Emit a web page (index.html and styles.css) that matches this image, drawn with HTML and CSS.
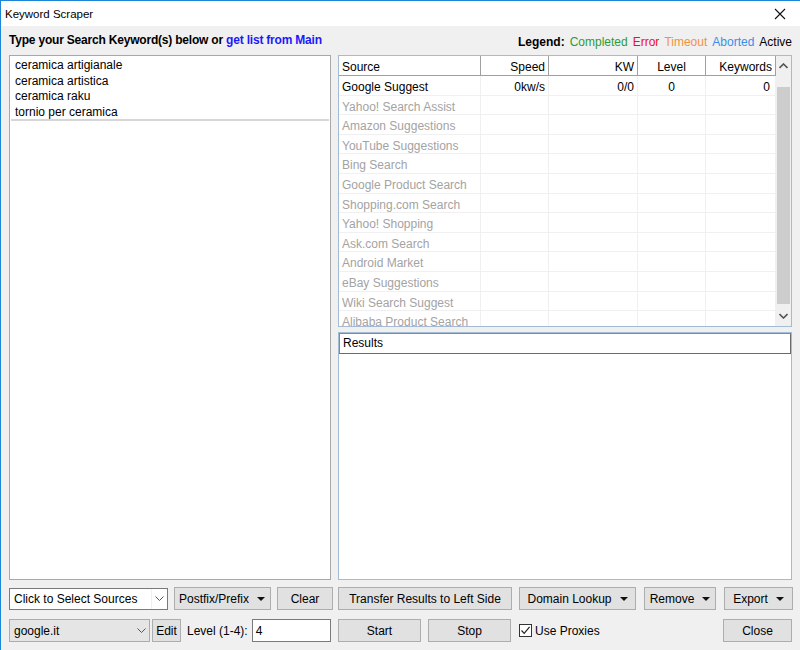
FILE: index.html
```html
<!DOCTYPE html>
<html>
<head>
<meta charset="utf-8">
<title>Keyword Scraper</title>
<link rel="stylesheet" href="styles.css">
</head>
<body>
<div class="window">
  <div class="titlebar">
    <span class="title">Keyword Scraper</span>
    <svg class="close-x" width="12" height="12" viewBox="0 0 12 12"><path d="M1 1L11 11M11 1L1 11" stroke="#111" stroke-width="1.1" fill="none"/></svg>
  </div>
  <div class="content">
    <div class="topline">
      <div class="heading">Type your Search Keyword(s) below or <span class="link">get list from Main</span></div>
      <div class="legend"><b>Legend:</b><span class="c-green">Completed</span><span class="c-red">Error</span><span class="c-orange">Timeout</span><span class="c-blue">Aborted</span><span>Active</span></div>
    </div>
    <div class="main">
      <div class="left">
        <div class="kwbox">
          <div class="kwline">ceramica artigianale</div>
          <div class="kwline">ceramica artistica</div>
          <div class="kwline">ceramica raku</div>
          <div class="kwline">tornio per ceramica</div>
          <div class="kwsep"></div>
        </div>
        <div class="brow row1">
          <div class="combo combo-white w-sources"><span>Click to Select Sources</span><span class="chev"><svg width="9" height="6" viewBox="0 0 9 6"><path d="M0.5 0.5L4.5 4.5L8.5 0.5" stroke="#555" fill="none"/></svg></span></div>
          <div class="btn w-postfix">Postfix/Prefix <i class="tri"></i></div>
          <div class="btn w-clear">Clear</div>
        </div>
        <div class="brow row2">
          <div class="combo combo-gray w-google"><span>google.it</span><span class="chev"><svg width="9" height="6" viewBox="0 0 9 6"><path d="M0.5 0.5L4.5 4.5L8.5 0.5" stroke="#555" fill="none"/></svg></span></div>
          <div class="btn w-edit">Edit</div>
          <span class="lbl">Level (1-4):</span>
          <div class="input w-level">4</div>
        </div>
      </div>
      <div class="right">
        <div class="table">
          <div class="grid">
            <div class="th left-al">Source</div>
            <div class="th right-al">Speed</div>
            <div class="th right-al">KW</div>
            <div class="th center-al">Level</div>
            <div class="th right-al">Keywords</div>

            <div class="td left-al active">Google Suggest</div>
            <div class="td right-al active">0kw/s</div>
            <div class="td right-al active">0/0</div>
            <div class="td center-al active">0</div>
            <div class="td right-al active kwc">0</div>

            <div class="td left-al">Yahoo! Search Assist</div><div class="td"></div><div class="td"></div><div class="td"></div><div class="td"></div>
            <div class="td left-al">Amazon Suggestions</div><div class="td"></div><div class="td"></div><div class="td"></div><div class="td"></div>
            <div class="td left-al">YouTube Suggestions</div><div class="td"></div><div class="td"></div><div class="td"></div><div class="td"></div>
            <div class="td left-al">Bing Search</div><div class="td"></div><div class="td"></div><div class="td"></div><div class="td"></div>
            <div class="td left-al">Google Product Search</div><div class="td"></div><div class="td"></div><div class="td"></div><div class="td"></div>
            <div class="td left-al">Shopping.com Search</div><div class="td"></div><div class="td"></div><div class="td"></div><div class="td"></div>
            <div class="td left-al">Yahoo! Shopping</div><div class="td"></div><div class="td"></div><div class="td"></div><div class="td"></div>
            <div class="td left-al">Ask.com Search</div><div class="td"></div><div class="td"></div><div class="td"></div><div class="td"></div>
            <div class="td left-al">Android Market</div><div class="td"></div><div class="td"></div><div class="td"></div><div class="td"></div>
            <div class="td left-al">eBay Suggestions</div><div class="td"></div><div class="td"></div><div class="td"></div><div class="td"></div>
            <div class="td left-al">Wiki Search Suggest</div><div class="td"></div><div class="td"></div><div class="td"></div><div class="td"></div>
            <div class="td left-al">Alibaba Product Search</div><div class="td"></div><div class="td"></div><div class="td"></div><div class="td"></div>
          </div>
          <div class="scrollbar">
            <div class="sb-btn"><svg width="9" height="6" viewBox="0 0 9 6"><path d="M0.5 5L4.5 1L8.5 5" stroke="#555" stroke-width="1.6" fill="none"/></svg></div>
            <div class="sb-track"><div class="sb-thumb"></div></div>
            <div class="sb-btn"><svg width="9" height="6" viewBox="0 0 9 6"><path d="M0.5 1L4.5 5L8.5 1" stroke="#555" stroke-width="1.6" fill="none"/></svg></div>
          </div>
        </div>
        <div class="results">
          <div class="res-head">Results</div>
          <div class="res-body"></div>
        </div>
        <div class="brow row1">
          <div class="btn w-transfer">Transfer Results to Left Side</div>
          <div class="btn w-domain">Domain Lookup <i class="tri"></i></div>
          <div class="btn w-remove">Remove <i class="tri"></i></div>
          <div class="btn w-export">Export <i class="tri"></i></div>
        </div>
        <div class="brow row2">
          <div class="btn w-start">Start</div>
          <div class="btn w-stop">Stop</div>
          <label class="check"><span class="cbox"><svg width="11" height="11" viewBox="0 0 11 11"><path d="M1.5 5.5L4.2 8.3L9.6 1.8" stroke="#222" stroke-width="1.2" fill="none"/></svg></span>Use Proxies</label>
          <div class="spacer"></div>
          <div class="btn w-close">Close</div>
        </div>
      </div>
    </div>
  </div>
</div>
</body>
</html>
```

FILE: styles.css
```css
* { box-sizing: border-box; }
html, body { margin: 0; padding: 0; }
body {
  width: 800px;
  height: 650px;
  overflow: hidden;
  font-family: "Liberation Sans", Arial, sans-serif;
  font-size: 12px;
  color: #000;
  background: #f0f0f0;
}
.window {
  width: 800px;
  height: 650px;
  border-top: 1px solid #1c86d8;
  border-left: 1px solid #1c86d8;
  display: flex;
  flex-direction: column;
  background: #f0f0f0;
}
.titlebar {
  height: 25px;
  background: #fff;
  display: flex;
  align-items: center;
  justify-content: space-between;
  padding: 0 14px 0 4px;
  flex: none;
}
.title { font-size: 11.5px; }
.close-x { display: block; }
.content {
  flex: 1;
  padding: 0 8px 8px 8px;
  display: flex;
  flex-direction: column;
}
.topline {
  height: 29px;
  display: flex;
  justify-content: space-between;
  align-items: flex-start;
  flex: none;
}
.heading {
  font-weight: bold;
  font-size: 12px;
  padding-top: 7px;
  letter-spacing: -0.2px;
}
.link { color: #1a1aff; }
.legend {
  padding-top: 9px;
  font-size: 12px;
  display: flex;
  gap: 5px;
  white-space: nowrap;
}
.legend b { font-weight: bold; }
.c-green { color: #2f9a35; }
.c-red { color: #ec1028; }
.c-orange { color: #f6903c; }
.c-blue { color: #3b8ee8; }

.main {
  flex: 1;
  display: grid;
  grid-template-columns: 322px 454px;
  column-gap: 7px;
}
.left, .right {
  display: flex;
  flex-direction: column;
  min-height: 0;
}
.kwbox {
  flex: 1;
  background: #fff;
  border: 1px solid #a8a8a8;
  padding: 1px 1px 0 1px;
}
.kwline {
  height: 15.6px;
  line-height: 16px;
  padding-left: 4px;
  white-space: nowrap;
}
.kwsep {
  height: 2px;
  background: #d6d6d6;
}
.brow {
  display: flex;
  align-items: center;
  flex: none;
}
.row1 { margin-top: 7px; height: 23px; }
.row2 { margin-top: 9px; height: 23px; }

.btn {
  height: 23px;
  background: #e1e1e1;
  border: 1px solid #adadad;
  display: flex;
  align-items: center;
  justify-content: center;
  white-space: nowrap;
  flex: none;
}
.tri {
  display: inline-block;
  width: 0; height: 0;
  border-left: 4px solid transparent;
  border-right: 4px solid transparent;
  border-top: 4px solid #111;
  margin-left: 8px;
  margin-top: 1px;
}
.combo {
  height: 22px;
  display: flex;
  align-items: center;
  justify-content: space-between;
  padding-left: 4px;
  flex: none;
  white-space: nowrap;
}
.combo-white { background: #fff; border: 1px solid #7a7a7a; }
.combo-gray { background: #e5e5e5; border: 1px solid #acacac; height: 23px; }
.chev {
  width: 16px;
  height: 100%;
  display: flex;
  align-items: center;
  justify-content: center;
}
.combo-white .chev { border-left: 1px solid #f0f0f0; }
.chev svg { display: block; }

.w-sources { width: 159px; }
.w-postfix { width: 97px; margin-left: 6px; justify-content: flex-start; padding-left: 4px; }
.w-clear { width: 56px; margin-left: 6px; }
.w-google { width: 141px; }
.w-edit { width: 29px; margin-left: 2px; }
.lbl { margin-left: 6px; white-space: nowrap; flex: none; }
.input {
  height: 23px;
  background: #fff;
  border: 1px solid #7a7a7a;
  display: flex;
  align-items: center;
  padding-left: 3px;
}
.w-level { flex: 1; min-width: 0; margin-left: 4px; }

.w-transfer { width: 174px; }
.w-domain { width: 117px; margin-left: 7px; }
.w-remove { width: 72px; margin-left: 8px; }
.w-export { width: 69px; margin-left: 8px; }
.w-start { width: 83px; }
.w-stop { width: 83px; margin-left: 7px; }
.w-close { width: 69px; }
.spacer { flex: 1; }
.check {
  display: flex;
  align-items: center;
  margin-left: 8px;
  white-space: nowrap;
}
.cbox {
  width: 13px; height: 13px;
  border: 1px solid #333;
  background: #fff;
  display: flex;
  align-items: center;
  justify-content: center;
  margin-right: 3px;
}
.cbox svg { display: block; }

.table {
  height: 272px;
  border: 1px solid #a4bbd6;
  background: #fff;
  display: flex;
  overflow: hidden;
  flex: none;
}
.grid {
  width: 437px;
  display: grid;
  grid-template-columns: 142px 68px 89px 68px 70px;
  grid-auto-rows: 19.6px;
  grid-template-rows: 20px;
  align-content: start;
}
.th {
  height: 20px;
  border-right: 1px solid #a0a0a0;
  border-bottom: 1px solid #a0a0a0;
  line-height: 19px;
  padding: 2px 3px 0;
  white-space: nowrap;
}
.td {
  border-right: 1px solid #f0f0f0;
  border-bottom: 1px solid #f0f0f0;
  line-height: 19px;
  padding: 2px 3px 0;
  color: #a3a3a3;
  white-space: nowrap;
  overflow: hidden;
}
.td.active { color: #000; }
.td.kwc { padding-right: 5px; }
.left-al { text-align: left; }
.right-al { text-align: right; }
.center-al { text-align: center; }

.scrollbar {
  width: 15px;
  display: flex;
  flex-direction: column;
  background: #f0f0f0;
}
.sb-btn {
  height: 20px;
  display: flex;
  align-items: center;
  justify-content: center;
  flex: none;
}
.sb-btn svg { display: block; }
.sb-track { flex: 1; padding: 11px 1px 2px 1px; }
.sb-thumb { height: 100%; background: #cdcdcd; }

.results {
  flex: 1;
  margin-top: 5px;
  border: 1px solid #a4bbd6;
  background: #fff;
  display: flex;
  flex-direction: column;
}
.res-head {
  height: 21px;
  border: 1px solid #8a8a8a;
  border-right-color: #6a6a6a;
  border-bottom-color: #6a6a6a;
  line-height: 19px;
  padding-left: 3px;
  background: #fff;
  flex: none;
}
.res-body { flex: 1; }
```
